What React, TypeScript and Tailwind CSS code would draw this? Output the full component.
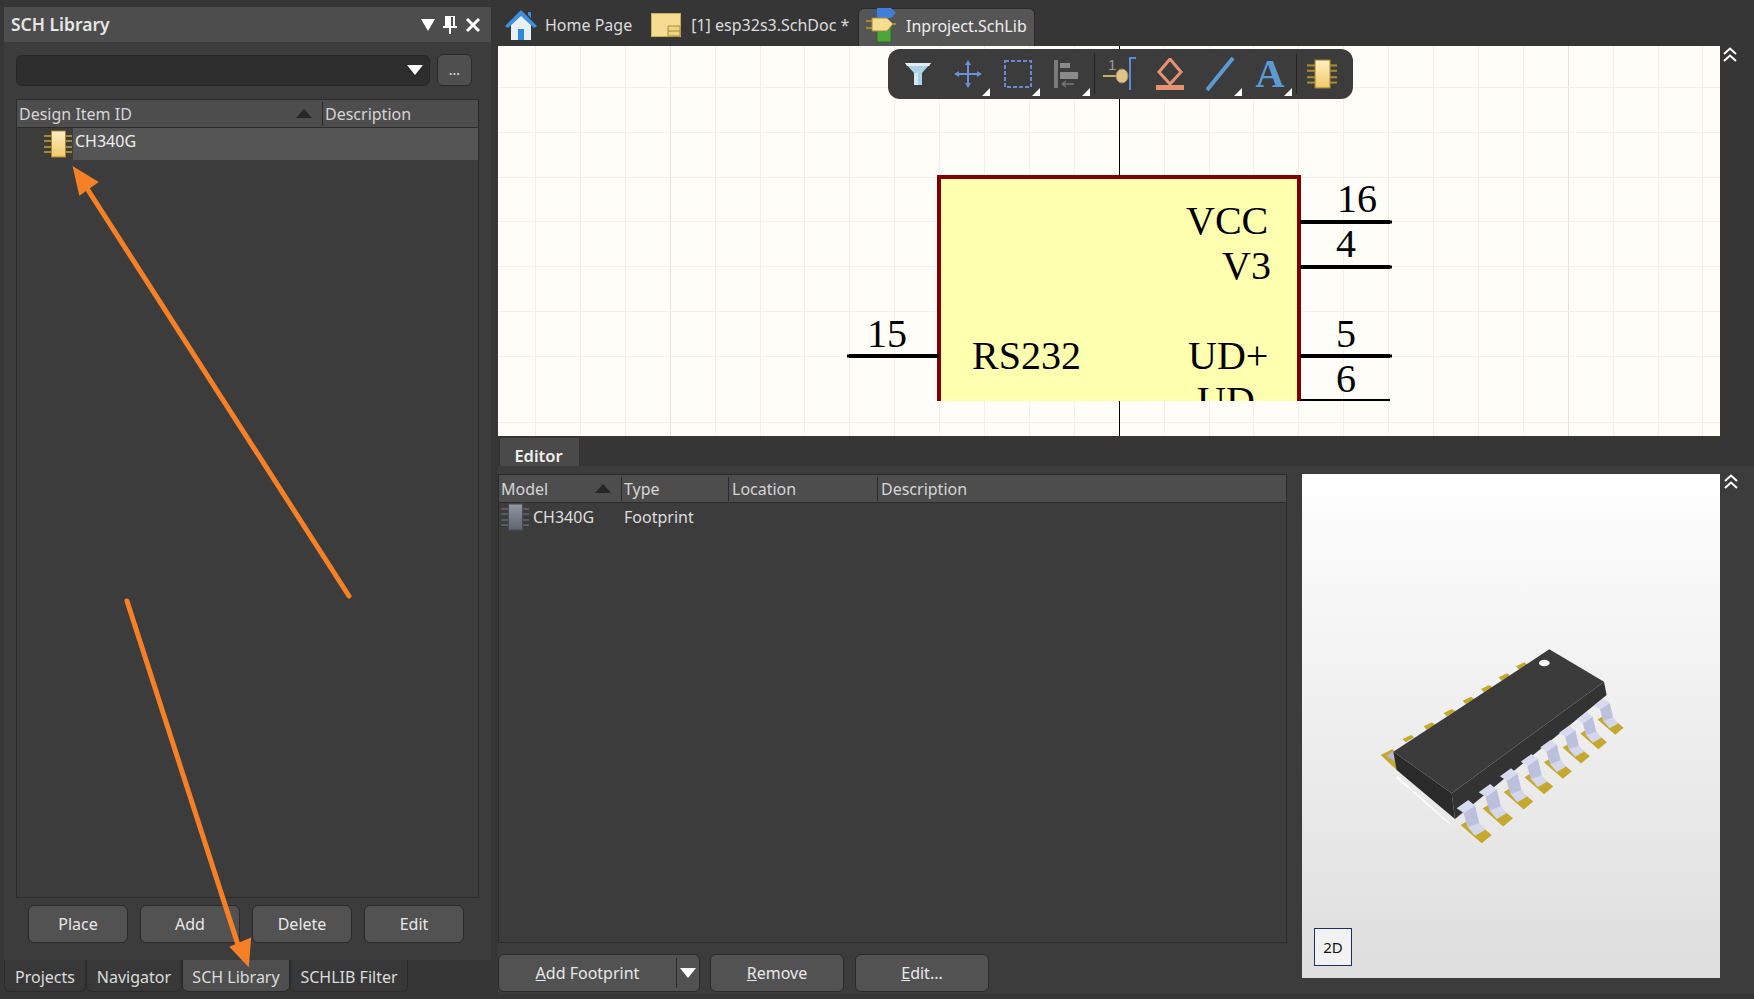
import React from "react";

const xs = Array.from({ length: 27 }, (_, i) => 37 + i * 44.9);
const ys = [41, 86, 131, 175, 220, 265, 310, 376];

const Corner = ({ className }: { className: string }) => (
  <svg width="8" height="8" viewBox="0 0 8 8" className={`absolute ${className}`}>
    <path d="M8 0V8H0Z" fill="#fff" />
  </svg>
);

const Chip = ({ gray, size = 28 }: { gray?: boolean; size?: number }) => {
  const lead = gray ? "#555a63" : "#a58a33";
  const id = gray ? "chipGray" : "chipGold";
  return (
    <svg width={size} height={size} viewBox="0 0 28 28" className="shrink-0">
      <defs>
        <linearGradient id={id} x1="0" y1="0" x2="0" y2="1">
          <stop offset="0" stopColor={gray ? "#8f97a3" : "#fff0c4"} />
          <stop offset="1" stopColor={gray ? "#5e6570" : "#f2c768"} />
        </linearGradient>
      </defs>
      {[6, 11, 17, 22].map((y) => (
        <path key={y} d={`M0 ${y}H28`} stroke={lead} strokeWidth="2" />
      ))}
      <rect x="7.5" y="1" width="14" height="26" fill={`url(#${id})`} stroke={gray ? "#444a52" : "#a58a33"} />
    </svg>
  );
};

const HomeIcon = () => (
  <svg width="32" height="32" viewBox="0 0 32 32" className="shrink-0">
    <path d="M6 14V31H26V14L16 5Z" fill="#e9eef5" />
    <path d="M13 20H19V31H13Z" fill="#2f86e0" />
    <path d="M0 17L16 1L32 17L29 19L16 7L3 19Z" fill="#3b8fe0" />
    <path d="M23 3H26V9L23 6Z" fill="#3b8fe0" />
  </svg>
);

const SchDocIcon = () => (
  <svg width="30" height="24" viewBox="0 0 30 24" className="shrink-0">
    <rect x="0.5" y="0.5" width="29" height="23" fill="#f6dc90" stroke="#c8ae62" />
    <path d="M17 13H29V23H17Z" fill="#f3d27c" stroke="#a08a45" />
    <path d="M17 18H29" stroke="#a08a45" />
  </svg>
);

const SchLibIcon = () => (
  <svg width="30" height="36" viewBox="0 0 30 36" className="shrink-0">
    <path d="M11 0H25L30 5L25 10H11Z" fill="#3f7fd8" />
    <path d="M5 5H11" stroke="#2b5ca8" strokeWidth="1.5" />
    <rect x="11" y="18" width="14" height="16" fill="#4ea53c" stroke="#2d6b22" />
    <path d="M6 10H21L27 16L21 23H6Z" fill="#f6dc90" stroke="#a08a45" />
    <path d="M0 13H6M0 20H6M27 16H30" stroke="#a58a33" strokeWidth="2" />
  </svg>
);

const Chevrons = () => (
  <svg width="16" height="16" viewBox="0 0 16 16">
    <path d="M2 7L8 1.5L14 7M2 14L8 8.5L14 14" fill="none" stroke="#fff" strokeWidth="2" />
  </svg>
);

const SortUp = () => (
  <svg width="16" height="9" viewBox="0 0 16 9" className="shrink-0">
    <path d="M0 9L8 0L16 9Z" fill="#262626" />
  </svg>
);

const DownArrow = () => (
  <svg width="16" height="10" viewBox="0 0 16 10">
    <path d="M0 0H16L8 10Z" fill="#fff" />
  </svg>
);

const ToolItem = ({ corner, children }: { corner?: boolean; children: React.ReactNode }) => (
  <div className="relative flex h-full w-[50px] shrink-0 items-center justify-center">
    {children}
    {corner && <Corner className="right-[3px] bottom-[3px]" />}
  </div>
);

const Toolbar = () => (
  <div className="absolute top-[3px] left-[390px] flex h-[50px] w-[465px] items-center rounded-xl bg-[#3c3c3c] pl-[5px]">
    <ToolItem>
      <svg width="26" height="24" viewBox="0 0 26 24">
        <path d="M0 1H26L17 11V23H9V11Z" fill="#a9d3e6" />
        <path d="M0 1H26L24 4H2Z" fill="#e0eef4" />
        <path d="M9 11H13V23H9Z" fill="#d4e8f0" />
      </svg>
    </ToolItem>
    <ToolItem corner>
      <svg width="28" height="28" viewBox="0 0 28 28">
        <path d="M14 2V26M2 14H26" stroke="#6b8fd6" strokeWidth="2" />
        <path d="M14 0L17 5H11ZM14 28L17 23H11ZM0 14L5 11V17ZM28 14L23 11V17Z" fill="#6b8fd6" />
      </svg>
    </ToolItem>
    <ToolItem corner>
      <svg width="28" height="28" viewBox="0 0 28 28">
        <rect x="1" y="1" width="26" height="26" fill="none" stroke="#6a88d8" strokeWidth="2" strokeDasharray="4 2" />
      </svg>
    </ToolItem>
    <ToolItem corner>
      <svg width="28" height="28" viewBox="0 0 28 28">
        <path d="M0 0H4V28H0Z" fill="#7a7a7a" />
        <path d="M6 3H16V8H6ZM6 12H24V19H6Z" fill="#8a8a8a" />
        <path d="M8 24H20M8 24L12 21M8 24L12 27" stroke="#777" strokeWidth="1.5" fill="none" />
      </svg>
    </ToolItem>
    <div className="ml-px h-[40px] w-px shrink-0 bg-[#222]" />
    <ToolItem>
      <svg width="34" height="34" viewBox="0 0 34 34">
        <text x="5" y="13" fontSize="15" fill="#9a9a9a" fontFamily="Liberation Sans, sans-serif">1</text>
        <path d="M0 19H16" stroke="#c9ad6a" strokeWidth="2" />
        <ellipse cx="19" cy="19" rx="6" ry="7" fill="#dcc48a" stroke="#a08a55" />
        <path d="M27 33V1H33" fill="none" stroke="#5b8bd6" strokeWidth="2" />
      </svg>
    </ToolItem>
    <ToolItem>
      <svg width="28" height="32" viewBox="0 0 28 32">
        <path d="M14 1L25 14L14 26L3 14Z" fill="none" stroke="#e59272" strokeWidth="3" />
        <path d="M0 27H28V32H0Z" fill="#e59272" />
      </svg>
    </ToolItem>
    <ToolItem corner>
      <svg width="28" height="36" viewBox="0 0 28 36">
        <path d="M1 34L27 2" stroke="#5b9bd5" strokeWidth="4" />
      </svg>
    </ToolItem>
    <ToolItem corner>
      <span className="font-['Liberation_Serif',serif] text-[40px] leading-none font-bold text-[#5b9bd5]">A</span>
    </ToolItem>
    <div className="ml-px h-[40px] w-px shrink-0 bg-[#222]" />
    <ToolItem>
      <Chip size={30} />
    </ToolItem>
  </div>
);

const Schematic = () => (
  <svg width="1222" height="390" viewBox="0 0 1222 390" className="block">
    <defs>
      <clipPath id="partClip">
        <rect x="0" y="0" width="1222" height="355" />
      </clipPath>
    </defs>
    <rect width="1222" height="390" fill="#fffdf8" />
    {xs.map((x, i) => (
      <path key={x} d={`M${Math.round(x) + 0.5} 0V390`} stroke={i % 10 === 3 ? "#e3e3de" : "#f1f0eb"} strokeWidth="1" />
    ))}
    {ys.map((y) => (
      <path key={y} d={`M0 ${y + 0.5}H1222`} stroke="#f1f0eb" strokeWidth="1" />
    ))}
    <path d="M621.5 0V390" stroke="#000" strokeWidth="1" />
    <g clipPath="url(#partClip)" fontFamily="'Liberation Serif', serif" fontSize="40" fill="#000">
      <rect x="441" y="131" width="360" height="260" fill="#ffffb0" stroke="#800000" strokeWidth="4" />
      <path d="M802 176H892M802 221H892M802 310H892M802 355H892M351 310H441" stroke="#000" strokeWidth="4" />
      <path d="M891 174.5h3v3h-3zM891 219.5h3v3h-3zM891 308.5h3v3h-3zM349 308.5h3v3h-3z" fill="#000" />
      <text x="688" y="188">VCC</text>
      <text x="724" y="233">V3</text>
      <text x="474" y="323">RS232</text>
      <text x="690" y="323">UD+</text>
      <text x="699" y="368">UD-</text>
      <text x="839" y="166">16</text>
      <text x="838" y="211">4</text>
      <text x="838" y="301">5</text>
      <text x="838" y="346">6</text>
      <text x="369" y="301">15</text>
    </g>
  </svg>
);

const pads: [number, number, number][] = [
  [410, 635, 1],
  [475, 585, 0.98],
  [537, 535, 0.95],
  [598, 490, 0.93],
  [655, 445, 0.9],
  [710, 400, 0.88],
  [762, 358, 0.86],
  [813, 315, 0.84],
];
const backPads = [
  [205, 355],
  [268, 317],
  [328, 277],
  [385, 240],
  [440, 205],
  [493, 170],
  [545, 137],
];

const pts = (list: number[][], x: number, y: number, s: number) =>
  list.map(([a, b]) => `${x + a * s},${y + b * s}`).join(" ");

const ChipModel = () => (
  <svg width="320" height="240" viewBox="0 0 960 720" className="absolute top-[146px] left-[38px]">
    {backPads.map(([x, y]) => (
      <polygon key={x} points={`${x - 17},${y + 2} ${x + 8},${y - 10} ${x + 18},${y - 3} ${x - 8},${y + 12}`} fill="#c4a92e" />
    ))}
    <polygon points="122,405 158,387 190,440 170,450" fill="#c4a92e" />
    <polygon points="140,408 160,392 165,425" fill="#b7bbd6" />
    <polygon points="172,468 335,615 328,612 168,473" fill="#ffffff" />
    <polygon points="160,395 335,520 345,597 170,450" fill="#2a2a2a" />
    <polygon points="792,185 800,225 345,597 335,520" fill="#333333" />
    <polygon points="628,88 792,185 335,520 160,395" fill="#3b3b3b" />
    <ellipse cx="613" cy="129" rx="16" ry="10" fill="#fff" />
    {pads.map(([x, y, s]) => (
      <g key={x}>
        <polygon points={pts([[-48, -20], [-15, -40], [45, 10], [15, 35]], x, y, s)} fill="#c4a92e" />
        <polygon points={pts([[-40, -58], [-5, -80], [8, -25], [-27, -12]], x, y, s)} fill="#bcc0dc" />
        <polygon points={pts([[-60, -70], [-25, -95], [-5, -78], [-38, -55]], x, y, s)} fill="#d8daf0" />
        <polygon points={pts([[-27, -14], [8, -27], [25, -5], [-5, 12]], x, y, s)} fill="#d4d7ec" />
      </g>
    ))}
  </svg>
);

const PanelButton = ({ children, className }: { children: React.ReactNode; className: string }) => (
  <button className={`flex h-[38px] shrink-0 items-center justify-center rounded-md border border-[#2b2b2b] bg-[#525252] pb-[1px] text-[#e8e8e8] ${className}`}>
    {children}
  </button>
);

const BottomTab = ({ label, width, active }: { label: string; width: string; active?: boolean }) => (
  <div className={`flex h-[32px] items-center justify-center rounded-b-md border border-t-0 border-[#2b2b2b] pt-[2px] text-[#dcdcdc] ${width} ${active ? "bg-[#4e4e4e]" : "bg-[#383838]"}`}>
    {label}
  </div>
);

const Arrows = () => (
  <svg width="1754" height="999" viewBox="0 0 1754 999" className="pointer-events-none absolute top-0 left-0">
    <path d="M349 596L88 190" stroke="#f58026" strokeWidth="5" strokeLinecap="round" />
    <path d="M74 168L97 182L80 194Z" fill="#f58026" stroke="#f58026" strokeWidth="2" />
    <path d="M127 601L238 945" stroke="#f58026" strokeWidth="5" strokeLinecap="round" />
    <path d="M248 965L231 947L250 939Z" fill="#f58026" stroke="#f58026" strokeWidth="2" />
  </svg>
);

export default function App() {
  return (
    <div className="relative flex h-[999px] w-[1754px] overflow-hidden bg-[#363636] font-['Noto_Sans',sans-serif] text-[16px]">
      {/* left docked panel */}
      <aside className="flex w-[498px] shrink-0 flex-col pt-[7px] pl-[4px]">
        <div className="flex h-[953px] w-[487px] flex-col bg-[#3c3c3c]">
          <div className="flex h-[35px] shrink-0 items-center justify-between bg-[#4d4d4d] pr-[10px] pl-[7px]">
            <span className="text-[17.5px] font-semibold text-[#e6e6e6]">SCH Library</span>
            <div className="flex items-center gap-[8px]">
              <svg width="14" height="12" viewBox="0 0 14 12">
                <path d="M0 0H14L7 12Z" fill="#fff" />
              </svg>
              <svg width="14" height="18" viewBox="0 0 14 18">
                <path d="M2 0H12V10H14V12H8V18H6V12H0V10H2ZM8 1V10H10V1Z" fill="#fff" />
              </svg>
              <svg width="16" height="16" viewBox="0 0 16 16">
                <path d="M2 2L14 14M14 2L2 14" stroke="#fff" strokeWidth="3" />
              </svg>
            </div>
          </div>
          <div className="mt-[12px] ml-[12px] flex shrink-0 items-center gap-[7px]">
            <div className="flex h-[31px] w-[414px] items-center justify-end rounded-md border border-[#262626] bg-[#2d2d2d] pr-[6px]">
              <DownArrow />
            </div>
            <div className="flex h-[32px] w-[35px] items-center justify-center rounded-md border border-[#2b2b2b] bg-[#4f4f4f] pb-[2px] text-[14px] text-[#e8e8e8]">
              ...
            </div>
          </div>
          <div className="mt-[13px] ml-[12px] flex h-[799px] w-[463px] flex-col border border-[#2b2b2b]">
            <div className="flex h-[28px] shrink-0 items-center border-b border-[#2b2b2b] bg-[#4d4d4d] text-[#d6d6d6]">
              <span className="w-[279px] pl-[2px]">Design Item ID</span>
              <SortUp />
              <div className="ml-[10px] h-[24px] w-px bg-[#2b2b2b]" />
              <span className="pl-[2px]">Description</span>
            </div>
            <div className="flex h-[32px] shrink-0 items-center">
              <div className="flex w-[56px] shrink-0 justify-end pr-[1px]">
                <Chip />
              </div>
              <div className="flex h-full flex-1 items-start bg-[#555555] pt-[1px] pl-[2px] text-[#eeeeee]">CH340G</div>
            </div>
          </div>
          <div className="mt-[7px] ml-[24px] flex gap-[12px]">
            <PanelButton className="w-[100px]">Place</PanelButton>
            <PanelButton className="w-[100px]">Add</PanelButton>
            <PanelButton className="w-[100px]">Delete</PanelButton>
            <PanelButton className="w-[100px]">Edit</PanelButton>
          </div>
        </div>
        <div className="flex">
          <BottomTab label="Projects" width="w-[82px]" />
          <BottomTab label="Navigator" width="w-[96px]" />
          <BottomTab label="SCH Library" width="w-[108px]" active />
          <BottomTab label="SCHLIB Filter" width="w-[118px]" />
        </div>
      </aside>

      <main className="flex min-w-0 flex-1 flex-col">
        {/* document tabs */}
        <div className="flex h-[46px] shrink-0 items-end text-[#dcdcdc]">
          <div className="flex h-[38px] w-[360px] items-center pb-[4px] pl-[7px]">
            <HomeIcon />
            <span className="ml-[8px]">Home Page</span>
            <span className="ml-[19px] flex items-center">
              <SchDocIcon />
            </span>
            <span className="ml-[10px]">[1] esp32s3.SchDoc *</span>
          </div>
          <div className="flex h-[38px] w-[177px] items-center rounded-t-md border border-b-0 border-[#2b2b2b] bg-[#555555] pb-[4px] pl-[7px] text-[#eeeeee]">
            <SchLibIcon />
            <span className="ml-[10px]">Inproject.SchLib</span>
          </div>
        </div>

        {/* schematic canvas */}
        <div className="flex h-[391px] shrink-0">
          <div className="relative h-[390px] w-[1222px] shrink-0">
            <Schematic />
            <Toolbar />
          </div>
          <div className="flex flex-1 justify-center pt-[1px] pr-[14px]">
            <Chevrons />
          </div>
        </div>

        {/* editor tab strip */}
        <div className="flex h-[29px] shrink-0 pl-[1px]">
          <div className="flex w-[81px] items-center justify-center border-x border-t border-[#333] bg-[#4a4a4a] pt-[8px] pr-[2px] text-[16.5px] font-semibold text-[#f0f0f0]">
            Editor
          </div>
        </div>

        {/* editor body */}
        <div className="flex h-[528px] bg-[#3c3c3c] pt-[8px]">
          <div className="flex w-[790px] shrink-0 flex-col">
            <div className="flex h-[469px] w-[789px] flex-col border border-[#2b2b2b]">
              <div className="flex h-[28px] shrink-0 items-center border-b border-[#2b2b2b] bg-[#4d4d4d] text-[#d6d6d6]">
                <span className="w-[96px] pl-[2px]">Model</span>
                <SortUp />
                <div className="ml-[10px] h-[24px] w-px bg-[#2b2b2b]" />
                <span className="w-[106px] pl-[2px]">Type</span>
                <div className="h-[24px] w-px bg-[#2b2b2b]" />
                <span className="w-[148px] pl-[3px]">Location</span>
                <div className="h-[24px] w-px bg-[#2b2b2b]" />
                <span className="pl-[3px]">Description</span>
              </div>
              <div className="flex h-[27px] items-center pl-[2px] text-[#dedede]">
                <Chip gray />
                <span className="w-[95px] pl-[4px]">CH340G</span>
                <span>Footprint</span>
              </div>
            </div>
            <div className="mt-[11px] flex">
              <div className="flex h-[38px] w-[202px] items-center rounded-md border border-[#2b2b2b] bg-[#525252] text-[#e8e8e8]">
                <span className="flex-1 text-center">
                  <u>A</u>dd Footprint
                </span>
                <div className="h-[30px] w-px bg-[#2b2b2b]" />
                <div className="flex w-[22px] justify-center">
                  <DownArrow />
                </div>
              </div>
              <PanelButton className="ml-[10px] w-[134px]">
                <span>
                  <u>R</u>emove
                </span>
              </PanelButton>
              <PanelButton className="ml-[11px] w-[134px]">
                <span>
                  <u>E</u>dit...
                </span>
              </PanelButton>
            </div>
          </div>
          <div className="relative ml-[14px] h-[504px] w-[418px] shrink-0 bg-gradient-to-b from-[#ffffff] to-[#dedede]">
            <ChipModel />
            <div className="absolute top-[454px] left-[12px] flex h-[38px] w-[38px] items-center justify-center border border-[#1c2f6b] bg-[#f2f2f2] text-[15px] text-[#111]">
              2D
            </div>
          </div>
          <div className="flex flex-1 justify-center pr-[12px]">
            <Chevrons />
          </div>
        </div>
      </main>

      <Arrows />
    </div>
  );
}
